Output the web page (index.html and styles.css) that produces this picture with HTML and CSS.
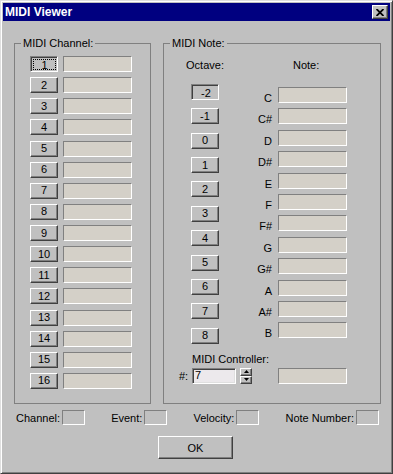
FILE: index.html
```html
<!DOCTYPE html>
<html lang="en">
<head>
    <meta charset="utf-8">
    <title>MIDI Viewer</title>
    <link rel="stylesheet" href="styles.css">
</head>
<body>

<div class="window">

    <div class="caption">
        <span class="caption-title">MIDI Viewer</span>
        <span class="close-btn">
            <svg width="8" height="7" viewBox="0 0 8 7"><path d="M0.5 0 L7.5 7 M7.5 0 L0.5 7" stroke="#000" stroke-width="1.8" fill="none"/></svg>
        </span>
    </div>

    <div class="groups">

        <fieldset class="group group-channel">
            <legend>MIDI Channel:</legend>
            <div class="channel-list">
                <div class="channel-row"><button class="btn btn-small pushed has-focus"><span class="focus">1</span></button><span class="field"></span></div>
                <div class="channel-row"><button class="btn btn-small">2</button><span class="field"></span></div>
                <div class="channel-row"><button class="btn btn-small">3</button><span class="field"></span></div>
                <div class="channel-row"><button class="btn btn-small">4</button><span class="field"></span></div>
                <div class="channel-row"><button class="btn btn-small">5</button><span class="field"></span></div>
                <div class="channel-row"><button class="btn btn-small">6</button><span class="field"></span></div>
                <div class="channel-row"><button class="btn btn-small">7</button><span class="field"></span></div>
                <div class="channel-row"><button class="btn btn-small">8</button><span class="field"></span></div>
                <div class="channel-row"><button class="btn btn-small">9</button><span class="field"></span></div>
                <div class="channel-row"><button class="btn btn-small">10</button><span class="field"></span></div>
                <div class="channel-row"><button class="btn btn-small">11</button><span class="field"></span></div>
                <div class="channel-row"><button class="btn btn-small">12</button><span class="field"></span></div>
                <div class="channel-row"><button class="btn btn-small">13</button><span class="field"></span></div>
                <div class="channel-row"><button class="btn btn-small">14</button><span class="field"></span></div>
                <div class="channel-row"><button class="btn btn-small">15</button><span class="field"></span></div>
                <div class="channel-row"><button class="btn btn-small">16</button><span class="field"></span></div>
            </div>
        </fieldset>

        <fieldset class="group group-note">
            <legend>MIDI Note:</legend>
            <div class="note-cols">
                <div class="octave-col">
                    <div class="col-head">Octave:</div>
                    <div class="octave-list">
                        <button class="btn btn-small pushed">-2</button>
                        <button class="btn btn-small">-1</button>
                        <button class="btn btn-small">0</button>
                        <button class="btn btn-small">1</button>
                        <button class="btn btn-small">2</button>
                        <button class="btn btn-small">3</button>
                        <button class="btn btn-small">4</button>
                        <button class="btn btn-small">5</button>
                        <button class="btn btn-small">6</button>
                        <button class="btn btn-small">7</button>
                        <button class="btn btn-small">8</button>
                    </div>
                </div>
                <div class="note-col">
                    <div class="col-head note-head">Note:</div>
                    <div class="note-list">
                        <div class="note-row"><span class="note-label">C</span><span class="field"></span></div>
                        <div class="note-row"><span class="note-label">C#</span><span class="field"></span></div>
                        <div class="note-row"><span class="note-label">D</span><span class="field"></span></div>
                        <div class="note-row"><span class="note-label">D#</span><span class="field"></span></div>
                        <div class="note-row"><span class="note-label">E</span><span class="field"></span></div>
                        <div class="note-row"><span class="note-label">F</span><span class="field"></span></div>
                        <div class="note-row"><span class="note-label">F#</span><span class="field"></span></div>
                        <div class="note-row"><span class="note-label">G</span><span class="field"></span></div>
                        <div class="note-row"><span class="note-label">G#</span><span class="field"></span></div>
                        <div class="note-row"><span class="note-label">A</span><span class="field"></span></div>
                        <div class="note-row"><span class="note-label">A#</span><span class="field"></span></div>
                        <div class="note-row"><span class="note-label">B</span><span class="field"></span></div>
                    </div>
                </div>
            </div>

            <div class="controller-label">MIDI Controller:</div>
            <div class="controller-row">
                <span class="hash">#:</span>
                <span class="edit">7</span>
                <span class="spin">
                    <span class="spin-btn"><svg width="5" height="3" viewBox="0 0 5 3"><path d="M2.5 0 L5 3 L0 3 Z" fill="#000"/></svg></span>
                    <span class="spin-btn"><svg width="5" height="3" viewBox="0 0 5 3"><path d="M0 0 L5 0 L2.5 3 Z" fill="#000"/></svg></span>
                </span>
                <span class="field"></span>
            </div>
        </fieldset>

    </div>

    <div class="status">
        <span class="stat">Channel:<span class="stat-box"></span></span>
        <span class="stat">Event:<span class="stat-box"></span></span>
        <span class="stat">Velocity:<span class="stat-box"></span></span>
        <span class="stat">Note Number:<span class="stat-box"></span></span>
    </div>

    <div class="actions">
        <button class="btn btn-ok">OK</button>
    </div>

</div> <!-- /window -->

</body>
</html>
```

FILE: styles.css
```css
* {
	box-sizing: border-box;
}
html, body {
	margin: 0;
	padding: 0;
}
body {
	font-family: "Liberation Sans", Arial, sans-serif;
	font-size: 11px;
	color: #000;
	background-color: #c0c0c0;
}
.window {
	width: 393px;
	height: 474px;
	padding: 2px;
	background-color: #c0c0c0;
	border: 1px solid;
	border-color: #dfdfdf #404040 #404040 #dfdfdf;
	box-shadow: inset 1px 1px #fff, inset -1px -1px #808080;
}

/* title bar */
.caption {
	height: 18px;
	display: flex;
	align-items: center;
	justify-content: space-between;
	padding: 0 2px;
	background-color: #000080;
}
.caption-title {
	color: #fff;
	font-weight: bold;
	font-size: 12px;
}
.close-btn {
	width: 16px;
	height: 14px;
	display: flex;
	align-items: center;
	justify-content: center;
	background-color: #c0c0c0;
	border: 1px solid;
	border-color: #fff #404040 #404040 #fff;
	box-shadow: inset -1px -1px #808080;
}

/* group boxes */
.groups {
	display: flex;
	gap: 12px;
	margin: 15px 0 0 11px;
}
.group {
	margin: 0;
	padding: 0;
	min-width: 0;
	height: 368px;
	border: 1px solid #808080;
}
.group > legend {
	margin-left: 6px;
	padding: 0 2px;
	line-height: 14px;
}
.group-channel {
	width: 137px;
}
.group-note {
	width: 218px;
}

/* buttons */
.btn {
	-webkit-appearance: none;
	appearance: none;
	margin: 0;
	padding: 0;
	font: inherit;
	color: #000;
	background-color: #c0c0c0;
	border: 1px solid;
	border-color: #fff #404040 #404040 #fff;
	box-shadow: inset -1px -1px #808080;
	display: flex;
	align-items: center;
	justify-content: center;
}
.btn-small {
	width: 28px;
	height: 16px;
	line-height: 12px;
	padding-bottom: 1px;
}
.btn.pushed {
	border-color: #808080 #fff #fff #808080;
	box-shadow: inset 1px 1px #404040;
	padding: 2px 0 0 2px;
}
.btn.has-focus {
	padding: 2px 1px 1px 2px;
}
.focus {
	width: 100%;
	height: 100%;
	display: flex;
	align-items: center;
	justify-content: center;
	border: 1px dotted #000;
}
.btn-ok {
	width: 75px;
	height: 23px;
}

/* read-only value boxes */
.field {
	display: block;
	width: 69px;
	height: 16px;
	background-color: #d4d0c8;
	border: 1px solid;
	border-color: #808080 #fff #fff #808080;
}

/* channel list */
.channel-list {
	display: flex;
	flex-direction: column;
	gap: 5.13px;
	padding: 6px 0 0 15px;
}
.channel-row {
	display: flex;
	gap: 5px;
}

/* note part */
.note-cols {
	display: flex;
	gap: 16px;
	margin: 9px 0 0 22px;
}
.col-head {
	line-height: 13px;
}
.octave-col {
	width: 38px;
	display: flex;
	flex-direction: column;
	align-items: center;
}
.octave-list {
	display: flex;
	flex-direction: column;
	gap: 8.37px;
	margin-top: 12px;
}
.note-head {
	padding-left: 53px;
}
.note-list {
	display: flex;
	flex-direction: column;
	gap: 5.4px;
	margin-top: 15px;
}
.note-row {
	display: flex;
	align-items: flex-end;
	gap: 6px;
}
.note-label {
	width: 32px;
	text-align: right;
	line-height: 13px;
	margin-bottom: -2px;
}

/* controller */
.controller-label {
	margin: 9px 0 0 28px;
	line-height: 13px;
}
.controller-row {
	display: flex;
	align-items: center;
	height: 16px;
	margin: 2px 0 0 15px;
}
.hash {
	width: 13px;
}
.edit {
	width: 44px;
	height: 16px;
	padding-left: 2px;
	line-height: 12px;
	background-color: #ece9ec;
	border: 1px solid;
	border-color: #808080 #fff #fff #808080;
	box-shadow: inset 1px 1px #404040, inset -1px -1px #dfdfdf;
}
.spin {
	width: 12px;
	height: 16px;
	margin-left: 4px;
	display: flex;
	flex-direction: column;
}
.spin-btn {
	height: 8px;
	display: flex;
	align-items: center;
	justify-content: center;
	background-color: #c0c0c0;
	border: 1px solid;
	border-color: #fff #404040 #404040 #fff;
	box-shadow: inset -1px -1px #808080;
}
.spin-btn svg {
	display: block;
}
.controller-row .field {
	margin-left: 26px;
}

/* status line */
.status {
	display: flex;
	justify-content: space-between;
	align-items: center;
	height: 15px;
	margin: 6px 11px 0 13px;
}
.stat {
	display: flex;
	align-items: center;
	gap: 2px;
}
.stat-box {
	width: 23px;
	height: 15px;
	border: 1px solid;
	border-color: #808080 #fff #fff #808080;
}
.actions {
	display: flex;
	justify-content: center;
	margin-top: 11px;
	padding-right: 2px;
}
```
